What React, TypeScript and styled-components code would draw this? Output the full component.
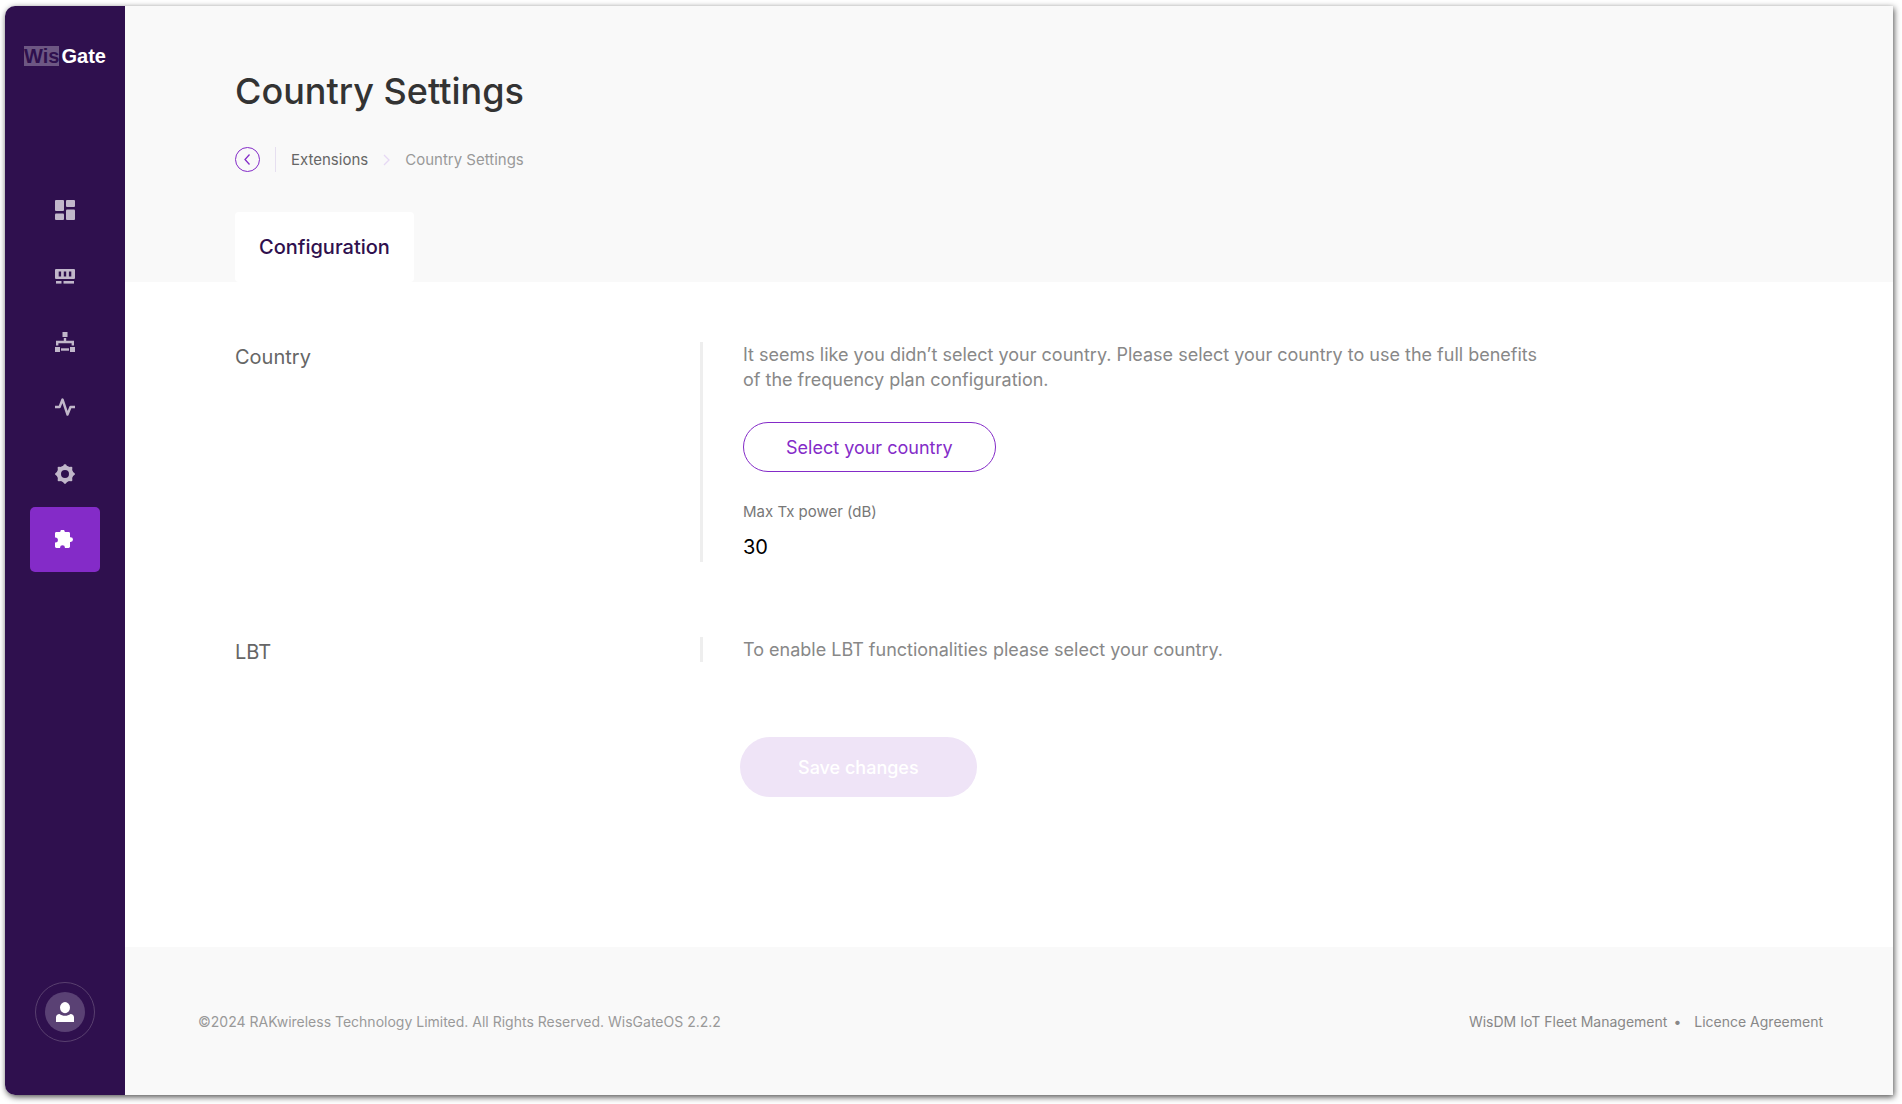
import React from 'react';
import styled, { createGlobalStyle } from 'styled-components';

const GlobalStyle = createGlobalStyle`
  *, *::before, *::after { box-sizing: border-box; }
  body {
    margin: 0;
    background: #fff;
    color: #333;
    font-family: Inter, "Liberation Sans", sans-serif;
  }
  h1, h2, p, dl, dd, ul { margin: 0; padding: 0; }
  a { color: inherit; text-decoration: none; }
`;

const Page = styled.div`
  display: flex;
  min-height: 100vh;
  padding: 6px 9px 9px 5px;
`;

const Shell = styled.div`
  display: flex;
  flex: 1;
  border-radius: 10px 0 0 10px;
  box-shadow: 1px 2px 6px 0 rgba(0, 0, 0, 0.7);
`;

const Sidebar = styled.aside`
  display: flex;
  flex-direction: column;
  align-items: center;
  flex: 0 0 120px;
  padding: 40px 0 53px;
  border-radius: 10px 0 0 10px;
  background: #2f104e;
`;

const Logo = styled.a`
  display: flex;
  align-items: center;
  gap: 2px;
  height: 20px;
  font: 700 20px/20px "Liberation Sans", Arial, sans-serif;
  color: #fff;
`;

const LogoMark = styled.span`
  background: #6d5783;
  color: #2f104e;
`;

const Nav = styled.nav`
  display: flex;
  flex-direction: column;
  gap: 1px;
  margin-top: 111px;
`;

const NavLink = styled.a<{ $active?: boolean }>`
  display: grid;
  place-items: center;
  width: 70px;
  height: 65px;
  border-radius: 5px;
  color: ${({ $active }) => ($active ? '#fff' : '#c1b7ca')};
  background: ${({ $active }) => ($active ? '#842bc8' : 'transparent')};
`;

const Avatar = styled.button`
  display: grid;
  place-items: center;
  width: 60px;
  height: 60px;
  margin-top: auto;
  padding: 0;
  border: 1px solid #59406f;
  border-radius: 50%;
  background: none;
  cursor: pointer;
`;

const AvatarDisc = styled.span`
  display: grid;
  place-items: center;
  width: 40px;
  height: 40px;
  border-radius: 50%;
  background: #5a4174;
  color: #fff;
`;

const Content = styled.div`
  display: flex;
  flex-direction: column;
  flex: 1;
  min-width: 0;
  background: #fff;
`;

const Header = styled.header`
  padding: 60px 110px 0;
  background: #f9f9f9;
`;

const Title = styled.h1`
  font-size: 36px;
  font-weight: 500;
  line-height: 50px;
`;

const Breadcrumb = styled.nav`
  display: flex;
  align-items: center;
  height: 25px;
  margin-top: 31px;
  font-size: 15px;
  line-height: 25px;
  color: #999;
`;

const BackButton = styled.button`
  display: grid;
  place-items: center;
  width: 25px;
  height: 25px;
  padding: 0;
  border: 1px solid #842bc8;
  border-radius: 50%;
  background: none;
  color: #842bc8;
  cursor: pointer;
`;

const Divider = styled.span`
  width: 1px;
  height: 25px;
  margin: 0 15px;
  background: #e6dff0;
`;

const CrumbLink = styled.a`
  color: #666;
`;

const CrumbArrow = styled.svg`
  margin: 0 15px;
  color: #e6d8f4;
`;

const Tabs = styled.div`
  display: flex;
  margin-top: 40px;
`;

const Tab = styled.button`
  height: 70px;
  padding: 0 24px;
  border: 0;
  border-radius: 4px;
  background: #fff;
  color: #2f104e;
  font: 500 20px/24px Inter, "Liberation Sans", sans-serif;
  cursor: pointer;
`;

const Main = styled.main`
  flex: 1;
  padding: 60px 110px;
`;

const Row = styled.section`
  display: grid;
  grid-template-columns: minmax(200px, 465px) 1fr;
  margin-bottom: 75px;
`;

const RowLabel = styled.h2`
  padding-top: 5px;
  font-size: 20px;
  font-weight: 400;
  line-height: 20px;
  color: #666;
`;

const RowBody = styled.div`
  padding-left: 40px;
  border-left: 3px solid #eee;
`;

const Text = styled.p`
  max-width: 800px;
  font-size: 18px;
  line-height: 25px;
  color: #888;
`;

const OutlineButton = styled.button`
  display: block;
  height: 50px;
  margin-top: 30px;
  padding: 2px 42px 0;
  border: 1px solid #842bc8;
  border-radius: 25px;
  background: #fff;
  color: #842bc8;
  font: 400 18px/24px Inter, "Liberation Sans", sans-serif;
  cursor: pointer;
`;

const Field = styled.dl`
  margin-top: 30px;
`;

const FieldName = styled.dt`
  font-size: 15px;
  line-height: 20px;
  color: #777;
`;

const FieldValue = styled.dd`
  padding: 13px 0 3px;
  font-size: 20px;
  line-height: 24px;
  color: #000;
`;

const Actions = styled.div`
  display: grid;
  grid-template-columns: minmax(200px, 465px) 1fr;
`;

const SaveButton = styled.button`
  grid-column: 2;
  justify-self: start;
  height: 60px;
  margin-left: 40px;
  padding: 2px 58px 0;
  border: 0;
  border-radius: 30px;
  background: #efe4f7;
  color: #fff;
  font: 500 18px/24px Inter, "Liberation Sans", sans-serif;
`;

const Footer = styled.footer`
  display: flex;
  align-items: center;
  justify-content: space-between;
  height: 148px;
  padding: 2px 70px 0 73px;
  background: #f9f9f9;
  font-size: 14px;
  line-height: 20px;
  color: #999;
`;

const FooterLinks = styled.ul`
  display: flex;
  gap: 6px;
  list-style: none;
  color: #888;
`;

const FooterItem = styled.li`
  display: flex;
`;

const FooterLink = styled.a`
  color: #888;
`;

const Dot = styled.span`
  margin-right: 13px;
`;

const DashboardIcon = () => (
  <svg width="20" height="20" viewBox="0 0 20 20" fill="currentColor" aria-hidden="true">
    <rect x="0" y="0" width="9" height="11" rx="1" />
    <rect x="11" y="0" width="9" height="7" rx="1" />
    <rect x="0" y="13.5" width="9" height="6.5" rx="1" />
    <rect x="11" y="9.5" width="9" height="10.5" rx="1" />
  </svg>
);

const GatewayIcon = () => (
  <svg width="20" height="20" viewBox="0 0 20 20" fill="currentColor" aria-hidden="true">
    <path
      fillRule="evenodd"
      d="M1 3h18a1 1 0 0 1 1 1v8a1 1 0 0 1-1 1H1a1 1 0 0 1-1-1V4a1 1 0 0 1 1-1ZM3.7 5.5v5h2.4v-5ZM8.8 5.5v5h2.4v-5ZM13.9 5.5v5h2.4v-5Z"
    />
    <rect x="1" y="15" width="5.5" height="2.6" />
    <rect x="8.5" y="15" width="10.5" height="2.6" />
  </svg>
);

const NetworkIcon = () => (
  <svg width="20" height="20" viewBox="0 0 20 20" fill="currentColor" aria-hidden="true">
    <rect x="7.5" y="0" width="5" height="5" />
    <rect x="0" y="15" width="5" height="5" />
    <rect x="15" y="15" width="5" height="5" />
    <rect x="6" y="16.3" width="8" height="2.4" />
    <path d="M10 6v4M2.2 13.5V10h15.6v3.5" fill="none" stroke="currentColor" strokeWidth="2.4" />
  </svg>
);

const ActivityIcon = () => (
  <svg width="20" height="20" viewBox="0 0 20 20" fill="none" aria-hidden="true">
    <path d="M0 9h4.6L7.5 1.5l5 15 3-7.5H20" stroke="currentColor" strokeWidth="2.4" strokeLinejoin="round" />
  </svg>
);

const GearIcon = () => (
  <svg width="20" height="20" viewBox="0 0 20 20" aria-hidden="true">
    <circle cx="10" cy="10" r="6.1" fill="none" stroke="currentColor" strokeWidth="4.2" />
    {[0, 45, 90, 135, 180, 225, 270, 315].map((angle) => (
      <path
        key={angle}
        d="M7 3 9.2.4Q10-.3 10.8.4L13 3Z"
        fill="currentColor"
        transform={`rotate(${angle} 10 10)`}
      />
    ))}
  </svg>
);

const PuzzleIcon = () => (
  <svg width="20" height="20" viewBox="0 0 20 20" fill="currentColor" aria-hidden="true">
    <path d="M0 3.4C0 2.6.6 2 1.4 2H5.2a2.3 2.3 0 0 1 4.6 0H13.6c.8 0 1.4.6 1.4 1.4V7.2h.6a2.4 2.4 0 0 1 0 4.8H15v4.6c0 .8-.6 1.4-1.4 1.4H9.9v-.4a2.4 2.4 0 0 0-4.8 0V18H1.4C.6 18 0 17.4 0 16.6V12.4h.4a2.5 2.5 0 0 0 0-5H0Z" />
  </svg>
);

const UserIcon = () => (
  <svg width="20" height="20" viewBox="0 0 20 20" fill="currentColor" aria-hidden="true">
    <ellipse cx="10" cy="5.6" rx="5" ry="5.6" />
    <path d="M1 20v-4.5C1 13.4 2.4 12 4.5 12c1.500 1.200 3.300 1.800 5.500 1.800s4-.6 5.500-1.800c2.100 0 3.500 1.400 3.500 3.500V20Z" />
  </svg>
);

const navItems = [
  { label: 'Dashboard', Icon: DashboardIcon },
  { label: 'Gateway', Icon: GatewayIcon },
  { label: 'Network', Icon: NetworkIcon },
  { label: 'Diagnostics', Icon: ActivityIcon },
  { label: 'Settings', Icon: GearIcon },
  { label: 'Extensions', Icon: PuzzleIcon, active: true },
];

export default function App() {
  return (
    <>
      <GlobalStyle />
      <Page>
        <Shell>
          <Sidebar>
            <Logo href="#">
              <LogoMark>Wis</LogoMark>
              <span>Gate</span>
            </Logo>
            <Nav aria-label="Main">
              {navItems.map(({ label, Icon, active }) => (
                <NavLink key={label} href="#" aria-label={label} $active={active}>
                  <Icon />
                </NavLink>
              ))}
            </Nav>
            <Avatar type="button" aria-label="Account">
              <AvatarDisc>
                <UserIcon />
              </AvatarDisc>
            </Avatar>
          </Sidebar>
          <Content>
            <Header>
              <Title>Country Settings</Title>
              <Breadcrumb aria-label="Breadcrumb">
                <BackButton type="button" aria-label="Back">
                  <svg width="11" height="11" viewBox="0 0 11 11" fill="none" aria-hidden="true">
                    <path d="M7.5.5l-4.500 5 4.500 5" stroke="currentColor" strokeWidth="1.3" />
                  </svg>
                </BackButton>
                <Divider />
                <CrumbLink href="#">Extensions</CrumbLink>
                <CrumbArrow width="7" height="12" viewBox="0 0 7 12" fill="none" aria-hidden="true">
                  <path d="M1 1l5 5-5 5" stroke="currentColor" strokeWidth="1.3" />
                </CrumbArrow>
                <span>Country Settings</span>
              </Breadcrumb>
              <Tabs role="tablist">
                <Tab type="button" role="tab" aria-selected="true">
                  Configuration
                </Tab>
              </Tabs>
            </Header>
            <Main>
              <Row>
                <RowLabel>Country</RowLabel>
                <RowBody>
                  <Text>
                    It seems like you didn’t select your country. Please select your country to use the full benefits of
                    the frequency plan configuration.
                  </Text>
                  <OutlineButton type="button">Select your country</OutlineButton>
                  <Field>
                    <FieldName>Max Tx power (dB)</FieldName>
                    <FieldValue>30</FieldValue>
                  </Field>
                </RowBody>
              </Row>
              <Row>
                <RowLabel>LBT</RowLabel>
                <RowBody>
                  <Text>To enable LBT functionalities please select your country.</Text>
                </RowBody>
              </Row>
              <Actions>
                <SaveButton type="button" disabled>
                  Save changes
                </SaveButton>
              </Actions>
            </Main>
            <Footer>
              <p>©2024 RAKwireless Technology Limited. All Rights Reserved. WisGateOS 2.2.2</p>
              <FooterLinks>
                <FooterItem>
                  <FooterLink href="#">WisDM IoT Fleet Management</FooterLink>
                </FooterItem>
                <FooterItem>
                  <Dot aria-hidden="true">•</Dot>
                  <FooterLink href="#">Licence Agreement</FooterLink>
                </FooterItem>
              </FooterLinks>
            </Footer>
          </Content>
        </Shell>
      </Page>
    </>
  );
}
